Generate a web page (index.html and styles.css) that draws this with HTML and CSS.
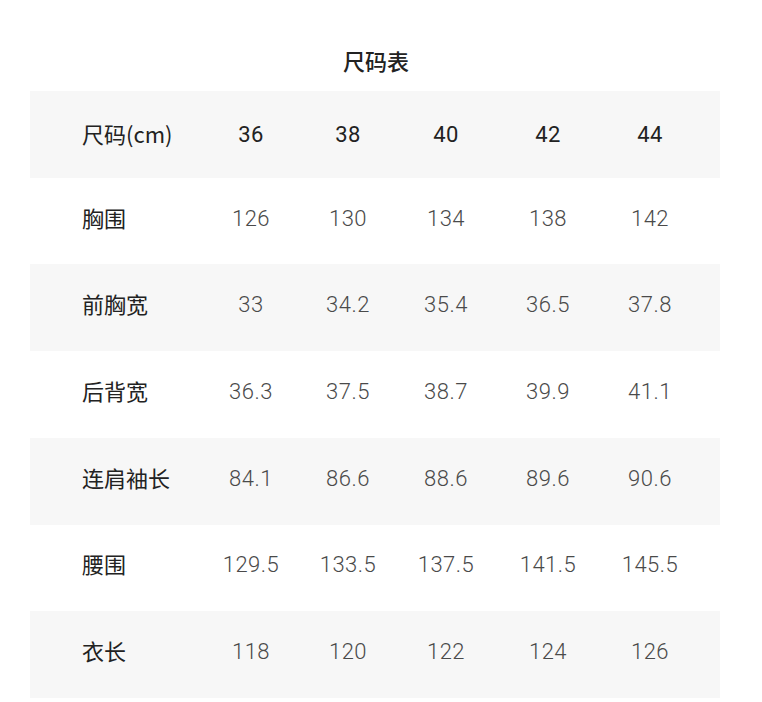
FILE: index.html
```html
<!DOCTYPE html>
<html lang="zh">
<head>
<meta charset="utf-8">
<link rel="stylesheet" href="styles.css">
</head>
<body>
<div class="page">
  <h1 class="title">尺码表</h1>
  <div class="table">
    <div class="row head"><div class="label">尺码(cm)</div><div class="cell">36</div><div class="cell">38</div><div class="cell">40</div><div class="cell">42</div><div class="cell">44</div></div>
    <div class="row"><div class="label">胸围</div><div class="cell">126</div><div class="cell">130</div><div class="cell">134</div><div class="cell">138</div><div class="cell">142</div></div>
    <div class="row alt"><div class="label">前胸宽</div><div class="cell">33</div><div class="cell">34.2</div><div class="cell">35.4</div><div class="cell">36.5</div><div class="cell">37.8</div></div>
    <div class="row"><div class="label">后背宽</div><div class="cell">36.3</div><div class="cell">37.5</div><div class="cell">38.7</div><div class="cell">39.9</div><div class="cell">41.1</div></div>
    <div class="row alt"><div class="label">连肩袖长</div><div class="cell">84.1</div><div class="cell">86.6</div><div class="cell">88.6</div><div class="cell">89.6</div><div class="cell">90.6</div></div>
    <div class="row"><div class="label">腰围</div><div class="cell">129.5</div><div class="cell">133.5</div><div class="cell">137.5</div><div class="cell">141.5</div><div class="cell">145.5</div></div>
    <div class="row alt"><div class="label">衣长</div><div class="cell">118</div><div class="cell">120</div><div class="cell">122</div><div class="cell">124</div><div class="cell">126</div></div>
  </div>
</div>
</body>
</html>
```

FILE: styles.css
```css
html, body {
  margin: 0;
  padding: 0;
  background: #ffffff;
}
.page {
  width: 762px;
  padding-top: 45px;
}
.title {
  margin: 0 0 16px 0;
  height: 30px;
  line-height: 30px;
  text-align: center;
  font-family: "Noto Sans CJK SC", sans-serif;
  font-size: 22px;
  font-weight: 500;
  color: #222222;
  padding-right: 10px;
}
.table {
  margin: 0 42px 0 30px;
  width: 690px;
}
.row {
  display: grid;
  grid-template-columns: 172px 98px 96px 100px 104px 100px;
  align-items: center;
  height: 86.72px;
}
.row.head, .row.alt {
  background: #f7f7f7;
}
.label {
  padding-left: 52px;
  padding-bottom: 9px;
  font-family: "Noto Sans CJK SC", sans-serif;
  font-size: 22px;
  color: #222222;
  white-space: nowrap;
}
.cell {
  text-align: center;
  padding-bottom: 6px;
  font-family: "Roboto", "Liberation Sans", sans-serif;
  font-weight: 300;
  font-size: 22px;
  letter-spacing: 0.5px;
  color: #4a4a4a;
}
.head .label {
  padding-bottom: 3px;
}
.head .cell {
  padding-bottom: 0;
  font-family: "Roboto", "Liberation Sans", sans-serif;
  font-weight: 400;
  color: #222222;
  font-size: 22px;
  letter-spacing: 0.5px;
}
```
